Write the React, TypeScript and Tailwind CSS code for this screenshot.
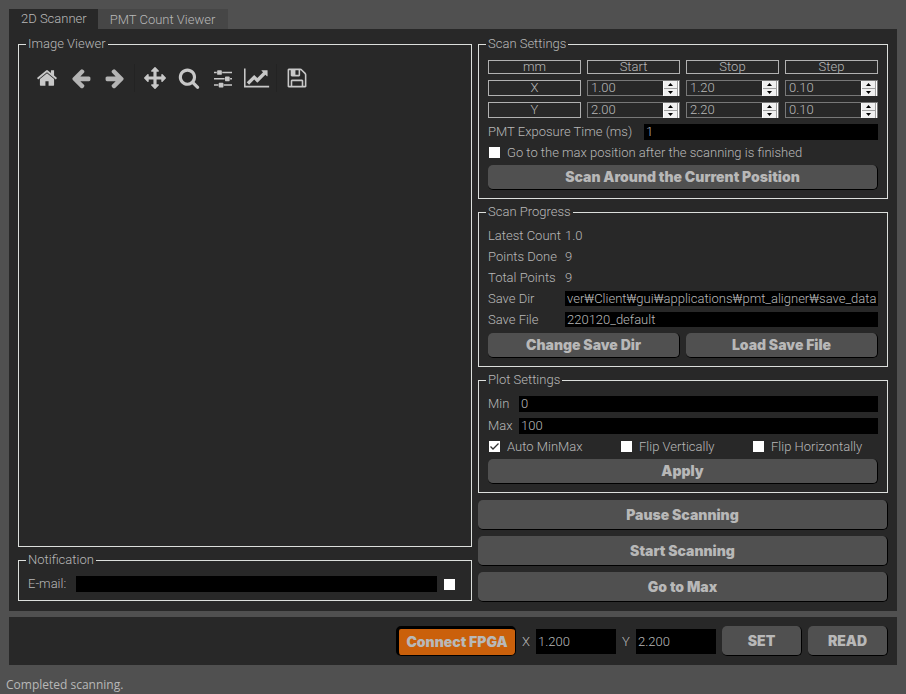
import React from "react";

const ICONS = {
  home: "M1472 992v480q0 26-19 45t-45 19h-384v-384h-256v384h-384q-26 0-45-19t-19-45v-480q0-1 .5-3t.5-3l575-474 575 474q1 2 1 6zm223-69l-62 74q-8 9-21 11h-3q-13 0-21-7l-692-577-692 577q-12 8-24 7-13-2-21-11l-62-74q-8-10-7-23.5t11-21.5l719-599q32-26 76-26t76 26l244 204v-195q0-14 9-23t23-9h192q14 0 23 9t9 23v408l219 182q10 8 11 21.5t-7 23.5z",
  back: "M1664 896v128q0 53-32.5 90.5t-84.5 37.5h-704l293 294q38 36 38 90t-38 90l-75 76q-37 37-90 37-52 0-91-37l-651-652q-37-37-37-90 0-52 37-91l651-650q38-38 91-38 52 0 90 38l75 74q38 38 38 91t-38 91l-293 293h704q52 0 84.5 37.5t32.5 90.5z",
  forward: "M1600 960q0 54-37 91l-651 651q-39 37-91 37-51 0-90-37l-75-75q-38-38-38-91t38-91l293-293h-704q-52 0-84.5-37.5t-32.5-90.5v-128q0-53 32.5-90.5t84.5-37.5h704l-293-294q-38-36-38-90t38-90l75-75q38-38 90-38 53 0 91 38l651 651q37 35 37 90z",
  pan: "M1792 896q0 26-19 45l-256 256q-19 19-45 19t-45-19-19-45v-128h-384v384h128q26 0 45 19t19 45-19 45l-256 256q-19 19-45 19t-45-19l-256-256q-19-19-19-45t19-45 45-19h128v-384h-384v128q0 26-19 45t-45 19-45-19l-256-256q-19-19-19-45t19-45l256-256q19-19 45-19t45 19 19 45v128h384v-384h-128q-26 0-45-19t-19-45 19-45l256-256q19-19 45-19t45 19l256 256q19 19 19 45t-19 45-45 19h-128v384h384v-128q0-26 19-45t45-19 45 19l256 256q19 19 19 45z",
  zoom: "M1216 832q0-185-131.5-316.5t-316.5-131.5-316.5 131.5-131.5 316.5 131.5 316.5 316.5 131.5 316.5-131.5 131.5-316.5zm512 832q0 52-38 90t-90 38q-54 0-90-38l-343-342q-179 124-399 124-143 0-273.5-55.5t-225-150-150-225-55.5-273.5 55.5-273.5 150-225 225-150 273.5-55.5 273.5 55.5 225 150 150 225 55.5 273.5q0 220-124 399l343 343q37 37 37 90z",
  sliders: "M352 1408v128h-352v-128h352zm352-128q26 0 45 19t19 45v256q0 26-19 45t-45 19h-256q-26 0-45-19t-19-45v-256q0-26 19-45t45-19h256zm160-384v128h-864v-128h864zm-640-512v128h-224v-128h224zm1312 1024v128h-736v-128h736zm-960-1152q26 0 45 19t19 45v256q0 26-19 45t-45 19h-256q-26 0-45-19t-19-45v-256q0-26 19-45t45-19h256zm640 512q26 0 45 19t19 45v256q0 26-19 45t-45 19h-256q-26 0-45-19t-19-45v-256q0-26 19-45t45-19h256zm320 128v128h-224v-128h224zm0-512v128h-864v-128h864z",
  chart: "M2048 1536v128h-2048v-1536h128v1408h1920zm-128-1248v435q0 21-19.5 29.5t-35.5-7.5l-121-121-633 633q-10 10-23 10t-23-10l-233-233-416 416-192-192 585-585q10-10 23-10t23 10l233 233 464-464-121-121q-16-16-7.5-35.5t29.5-19.5h435q14 0 23 9t9 23z",
  save: "M512 1536h768v-384h-768v384zm896 0h128v-896q0-14-10-38.5t-20-34.5l-281-281q-10-10-34-20t-39-10v416q0 40-28 68t-68 28h-576q-40 0-68-28t-28-68v-416h-128v1280h128v-416q0-40 28-68t68-28h832q40 0 68 28t28 68v416zm-384-928v-320q0-13-9.5-22.5t-22.5-9.5h-192q-13 0-22.5 9.5t-9.5 22.5v320q0 13 9.5 22.5t22.5 9.5h192q13 0 22.5-9.5t9.5-22.5zm640 32v928q0 40-28 68t-68 28h-1344q-40 0-68-28t-28-68v-1344q0-40 28-68t68-28h928q40 0 88 20t76 48l280 280q28 28 48 76t20 88z",
};

function Tool({ label, path, box = "0 0 1792 1792", dim }: { label: string; path: string; box?: string; dim?: boolean }) {
  return (
    <button type="button" aria-label={label} className="flex h-6 w-[34px] items-center justify-center">
      <svg viewBox={box} className={dim ? "h-[22px] fill-[#b4b4b4]" : "h-[22px] fill-[#c8c8c8]"}>
        <path d={path} />
      </svg>
    </button>
  );
}

function Group({ title, className = "", children }: { title: string; className?: string; children: React.ReactNode }) {
  return (
    <fieldset className={"min-w-0 border border-[#dcdfdc] px-[9px] pt-[7px] pb-2 " + className}>
      <legend className="-ml-[2px] px-[2px] pb-[2px] text-[13px] leading-[15px]">{title}</legend>
      {children}
    </fieldset>
  );
}

function PushButton({ children, className = "h-[25px]" }: { children: React.ReactNode; className?: string }) {
  return (
    <button
      type="button"
      className={
        "flex items-center justify-center rounded-[5px] border-r border-b border-black bg-[#505050] font-['Inter'] text-sm font-black whitespace-nowrap " +
        className
      }
    >
      {children}
    </button>
  );
}

function Check({ label, checked }: { label: string; checked?: boolean }) {
  return (
    <label className="flex h-[13px] items-center gap-[6px] whitespace-nowrap">
      <span className="grid size-[13px] shrink-0 place-items-center">
        <input
          type="checkbox"
          defaultChecked={checked}
          className="peer col-start-1 row-start-1 size-[11px] appearance-none bg-white"
        />
        <svg
          viewBox="0 0 11 11"
          className="pointer-events-none col-start-1 row-start-1 hidden size-[11px] fill-none stroke-[#303030] peer-checked:block"
        >
          <path d="M1.500 5.500L4 8L9.500 2.500" strokeWidth="1.300" />
        </svg>
      </span>
      {label}
    </label>
  );
}

function HeadCell({ children, className = "h-[14px]" }: { children: React.ReactNode; className?: string }) {
  return (
    <div className={"flex items-center justify-center border border-[#b1b1b1] pb-[2px] " + className}>{children}</div>
  );
}

function Spin({ label, value }: { label: string; value: string }) {
  return (
    <div className="flex h-4 border border-b-0 border-[#787878]">
      <input
        aria-label={label}
        defaultValue={value}
        className="w-0 min-w-0 flex-1 border-b border-[#787878] bg-transparent pb-[2px] pl-[3px] outline-none"
      />
      <div className="flex w-4 flex-col gap-px border-x border-white bg-[#a0a0a0] pr-px">
        <button type="button" aria-label={label + " up"} className="flex flex-1 items-center justify-center bg-[#f0f0f0]">
          <svg viewBox="0 0 5 3" className="h-[3px] w-[5px] fill-black"><path d="M0 3L2.500 0L5 3z" /></svg>
        </button>
        <button type="button" aria-label={label + " down"} className="flex flex-1 items-center justify-center bg-[#f0f0f0]">
          <svg viewBox="0 0 5 3" className="h-[3px] w-[5px] fill-black"><path d="M0 0L2.500 3L5 0z" /></svg>
        </button>
      </div>
    </div>
  );
}

const FIELD = "min-w-0 flex-1 bg-black px-[2px] pb-[2px] outline-none";

function Field({ id, label, value, labelWidth }: { id: string; label: string; value: string; labelWidth: string }) {
  return (
    <div className="flex h-4 items-center">
      <label htmlFor={id} className={"shrink-0 pb-[2px] whitespace-nowrap " + labelWidth}>{label}</label>
      <input id={id} defaultValue={value} className={"h-full " + FIELD} />
    </div>
  );
}

export default function App() {
  return (
    <div className="flex min-h-screen flex-col bg-[#505050] px-[9px] pt-[9px] font-['Roboto','Noto_Sans_CJK_KR',sans-serif] text-[13px] leading-[15px] font-light text-[#b8b8b8]">
      <div role="tablist" className="flex h-5">
        <button type="button" role="tab" aria-selected="true" className="bg-[#282828] pr-[11px] pb-[2px] pl-3">2D Scanner</button>
        <button type="button" role="tab" aria-selected="false" className="bg-[#464646] pr-[13px] pl-3">PMT Count Viewer</button>
      </div>

      <main className="grid grow grid-cols-[454fr_410fr] gap-[6px] bg-[#282828] px-[9px] pt-[7px] pb-[9px]">
        <div className="flex min-w-0 flex-col gap-[5px] pb-px">
          <Group title="Image Viewer" className="grow">
            <div className="flex items-center pt-1 pl-[2px]">
              <Tool label="Home" path={ICONS.home} />
              <Tool label="Back" path={ICONS.back} dim />
              <Tool label="Forward" path={ICONS.forward} dim />
              <div className="mr-[3px] ml-[2px] h-7 w-px bg-[#232323]" />
              <Tool label="Pan" path={ICONS.pan} />
              <Tool label="Zoom" path={ICONS.zoom} />
              <Tool label="Subplots" path={ICONS.sliders} box="0 0 1536 1792" />
              <Tool label="Axes" path={ICONS.chart} box="0 0 2048 1792" />
              <div className="mr-[3px] ml-[2px] h-7 w-px bg-[#232323]" />
              <Tool label="Save" path={ICONS.save} />
            </div>
          </Group>
          <Group title="Notification">
            <div className="flex h-4 items-center gap-[6px] pr-[6px]">
              <label htmlFor="email" className="w-[42px] shrink-0 pb-[2px]">E-mail:</label>
              <input id="email" className={"h-full " + FIELD} />
              <input type="checkbox" aria-label="Send e-mail" className="mx-px size-[11px] appearance-none bg-white" />
            </div>
          </Group>
        </div>

        <div className="flex min-w-0 flex-col gap-[5px]">
          <Group title="Scan Settings">
            <div className="flex flex-col gap-[6px]">
              <div className="grid grid-cols-4 gap-[6px]">
                <HeadCell>mm</HeadCell>
                <HeadCell>Start</HeadCell>
                <HeadCell>Stop</HeadCell>
                <HeadCell>Step</HeadCell>
                <HeadCell className="h-4">X</HeadCell>
                <Spin label="X start" value="1.00" />
                <Spin label="X stop" value="1.20" />
                <Spin label="X step" value="0.10" />
                <HeadCell className="h-4">Y</HeadCell>
                <Spin label="Y start" value="2.00" />
                <Spin label="Y stop" value="2.20" />
                <Spin label="Y step" value="0.10" />
              </div>
              <Field id="exposure" label="PMT Exposure Time (ms)" value="1" labelWidth="w-[156px]" />
              <Check label="Go to the max position after the scanning is finished" />
              <PushButton>Scan Around the Current Position</PushButton>
            </div>
          </Group>

          <Group title="Scan Progress">
            <div className="flex flex-col gap-[6px]">
              <dl className="grid grid-cols-[77px_1fr] gap-y-[6px]">
                <dt>Latest Count</dt>
                <dd>1.0</dd>
                <dt>Points Done</dt>
                <dd>9</dd>
                <dt>Total Points</dt>
                <dd>9</dd>
              </dl>
              <div className="grid grid-cols-[77px_1fr] gap-y-[6px]">
                <label htmlFor="dir">Save Dir</label>
                <input id="dir" defaultValue="ver₩Client₩gui₩applications₩pmt_aligner₩save_data" className="h-[15px] min-w-0 bg-black px-[2px] text-right outline-none" />
                <label htmlFor="file">Save File</label>
                <input id="file" defaultValue="220120_default" className="h-[15px] min-w-0 bg-black px-[2px] outline-none" />
              </div>
              <div className="grid grid-cols-2 gap-[6px]">
                <PushButton>Change Save Dir</PushButton>
                <PushButton>Load Save File</PushButton>
              </div>
            </div>
          </Group>

          <Group title="Plot Settings">
            <div className="flex flex-col gap-[6px]">
              <Field id="min" label="Min" value="0" labelWidth="w-[31px]" />
              <Field id="max" label="Max" value="100" labelWidth="w-[31px]" />
              <div className="grid grid-cols-3 gap-[6px]">
                <Check label="Auto MinMax" checked />
                <Check label="Flip Vertically" />
                <Check label="Flip Horizontally" />
              </div>
              <PushButton>Apply</PushButton>
            </div>
          </Group>

          <div className="flex flex-col gap-[6px] pt-[2px]">
            <PushButton className="h-[30px]">Pause Scanning</PushButton>
            <PushButton className="h-[30px]">Start Scanning</PushButton>
            <PushButton className="h-[30px]">Go to Max</PushButton>
          </div>
        </div>
      </main>

      <section className="mt-[6px] flex h-12 items-center justify-end gap-[6px] bg-[#282828] px-[9px]">
        <button type="button" className="flex h-[30px] w-[120px] items-center justify-center rounded-[5px] border-t-[3px] border-r border-b border-l-[3px] border-black bg-[#ca600b] font-['Inter'] text-sm font-black whitespace-nowrap">
          Connect FPGA
        </button>
        <div className="flex items-center">
          <label htmlFor="posx" className="w-[14px]">X</label>
          <input id="posx" defaultValue="1.200" className="h-[25px] w-20 bg-black px-[2px] outline-none" />
        </div>
        <div className="flex items-center">
          <label htmlFor="posy" className="w-[14px]">Y</label>
          <input id="posy" defaultValue="2.200" className="h-[25px] w-20 bg-black px-[2px] outline-none" />
        </div>
        <PushButton className="h-[30px] w-20">SET</PushButton>
        <PushButton className="h-[30px] w-20">READ</PushButton>
      </section>

      <footer className="-ml-[3px] flex h-[29px] items-center pt-[10px] font-['Open_Sans',sans-serif] text-xs font-normal">Completed scanning.</footer>
    </div>
  );
}
